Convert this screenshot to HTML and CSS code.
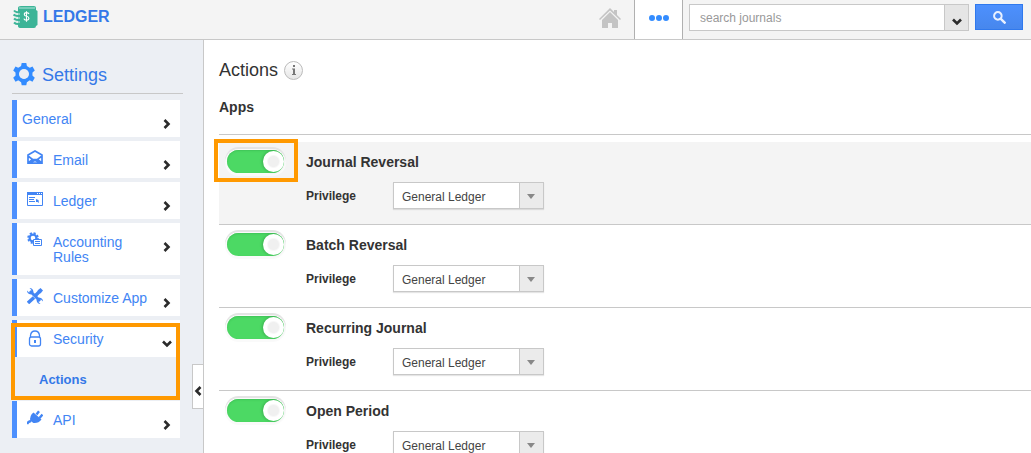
FILE: index.html
```html
<!DOCTYPE html>
<html lang="en">

<head>
    <meta charset="UTF-8">
    <meta name="viewport" content="width=device-width, initial-scale=1.0">
    <title>Ledger Settings</title>
    <link rel="stylesheet" href="styles.css">
</head>

<body>

    <!-- Shared icons -->
    <svg class="sprite" aria-hidden="true">
        <symbol id="chevron" viewBox="0 0 8 10">
            <path d="M1.5 1l4 4-4 4" fill="none" stroke="#2b2b2b" stroke-width="2.6" />
        </symbol>
    </svg>

    <!-- Top bar -->
    <header class="topbar">
        <a href="#" class="brand">
            <svg width="26" height="24" viewBox="0 0 26 24" aria-hidden="true">
                <path d="M5 3Q5 1 8 1h13q2 0 2 2v2l1.500 1v14L23 21q0 2-2 2H8q-3 0-3-2z" fill="#3cb497" />
                <path d="M6 3h16" stroke="#8ad6c4" stroke-width="1.500" />
                <path d="M1 5.500q2 2.500 6 1.500M.5 9.500q2.500 2 6.500 1.500M1 13.500q2 2 6 1.500M1 17.500q2 2 6 1.500" fill="none" stroke="#3cb497" stroke-width="2" />
                <path d="M2 8q2.500 1.500 5 1M2 12q2.500 1.500 5 1M2 16q2.500 1.500 5 1" fill="none" stroke="#d5efe8" />
                <path d="M16 9q-.5-1.400-2.500-1.400-2.200 0-2.200 1.800 0 1.400 2.300 1.900t2.300 2q0 1.900-2.400 1.900-2.300 0-2.600-1.600M13.500 6.200v10.600" fill="none" stroke="#fff" stroke-width="1.100" />
            </svg>
            LEDGER
        </a>
        <nav class="tabs">
            <a href="#" class="tab" aria-label="Home">
                <svg width="22" height="21" viewBox="0 0 22 21" aria-hidden="true">
                    <path d="M0 11L11 0l4 4V2h3v5l4 4-1 1L11 2.500 1 12z" fill="#c4c4c4" />
                    <path d="M3 12l8-8 8 8v8h-6v-5H9v5H3z" fill="#c4c4c4" />
                </svg>
            </a>
            <a href="#" class="tab active" aria-label="More">
                <svg width="20" height="6" viewBox="0 0 20 6" aria-hidden="true">
                    <path d="M3 0a3 3 0 100 6 3 3 0 000-6M10 0a3 3 0 100 6 3 3 0 000-6M17 0a3 3 0 100 6 3 3 0 000-6" fill="#338cff" />
                </svg>
            </a>
        </nav>
        <form class="search">
            <input type="text" class="search-input" placeholder="search journals" aria-label="Search journals">
            <button type="button" class="search-options" aria-label="Search options">
                <svg class="down" width="8" height="10"><use href="#chevron" /></svg>
            </button>
            <button type="button" class="search-btn" aria-label="Search">
                <svg width="13" height="13" viewBox="0 0 12 12" aria-hidden="true">
                    <circle cx="4.500" cy="4.500" r="3.500" fill="none" stroke="#e9f1ff" stroke-width="1.800" />
                    <path d="M7 7l4.500 4.500" stroke="#e9f1ff" stroke-width="2.200" />
                </svg>
            </button>
        </form>
    </header>

    <div class="layout">

        <!-- Sidebar -->
        <aside class="sidebar">
            <h2 class="sidebar-title">
                <svg width="24" height="24" viewBox="-1 0 26 26" aria-hidden="true">
                    <circle cx="12" cy="12" r="7" fill="none" stroke="#338cff" stroke-width="4.500" />
                    <path d="M9.500 0h5l1 5h-7zM9.500 24h5l1-5h-7zM.3 8l2.500-4.300L7.500 6 4 11.500zM23.700 8l-2.500-4.300L16.500 6l3.500 5.500zM.3 16l2.500 4.300L7.500 18 4 12.500zM23.700 16l-2.500 4.300-4.700-2.300 3.500-5.500z" fill="#338cff" />
                    <circle cx="12" cy="12" r="5.400" fill="#eceff4" />
                </svg>
                Settings
            </h2>
            <ul class="menu">
                <li>
                    <a href="#" class="menu-item">
                        <span class="menu-text">General</span>
                        <svg class="arrow" width="8" height="10"><use href="#chevron" /></svg>
                    </a>
                </li>
                <li>
                    <a href="#" class="menu-item">
                        <svg class="menu-icon" width="16" height="16" viewBox="0 0 16 16" aria-hidden="true">
                            <path d="M1 5l7-4 7 4v8.200H1zM1 6l4.500 3.500h5L15 6M1 13l4.500-3.500M15 13l-4.500-3.500M3 12.500l5-2 5 2" fill="none" stroke="#4285f4" stroke-width="1.700" />
                        </svg>
                        <span class="menu-text">Email</span>
                        <svg class="arrow" width="8" height="10"><use href="#chevron" /></svg>
                    </a>
                </li>
                <li>
                    <a href="#" class="menu-item">
                        <svg class="menu-icon" width="16" height="16" viewBox="0 0 16 16" aria-hidden="true">
                            <path d="M.5 1.500h15v13H.5z" fill="none" stroke="#4285f4" />
                            <path d="M0 1h16v3H0z" fill="#4285f4" />
                            <path d="M10 2.500h1M12 2.500h1M14 2.500h1" stroke="#fff" />
                            <path d="M2 6.500h6M2 8.500h5M2 10.500h6" stroke="#4285f4" />
                            <path d="M9 8l2.500 1L12 12l-1.500-1L9 11z" fill="#4285f4" />
                        </svg>
                        <span class="menu-text">Ledger</span>
                        <svg class="arrow" width="8" height="10"><use href="#chevron" /></svg>
                    </a>
                </li>
                <li>
                    <a href="#" class="menu-item">
                        <svg class="menu-icon" width="16" height="16" viewBox="0 0 16 16" aria-hidden="true">
                            <circle cx="6" cy="6" r="3.400" fill="none" stroke="#4285f4" stroke-width="2.200" />
                            <circle cx="6" cy="6" r="5" fill="none" stroke="#4285f4" stroke-width="1.600" stroke-dasharray="2.200 1.720" />
                            <path d="M6.500 7.500h8v6h-8z" fill="#fff" stroke="#4285f4" />
                            <path d="M8 9.500h5M8 11.500h5" stroke="#4285f4" />
                        </svg>
                        <span class="menu-text">Accounting Rules</span>
                        <svg class="arrow" width="8" height="10"><use href="#chevron" /></svg>
                    </a>
                </li>
                <li>
                    <a href="#" class="menu-item">
                        <svg class="menu-icon" width="16" height="16" viewBox="0 0 16 16" aria-hidden="true">
                            <path d="M3 3l10 10" stroke="#4285f4" stroke-width="3" />
                            <path d="M0 2.500L2 4.500 4 4 4.500 2 2.500 0Q6 0 6.500 4L4 6.500Q0 6 0 2.500zM16 13.500l-2-2-2 .5-.5 2 2 2Q10 16 9.500 12L12 9.500q4 .5 4 4z" fill="#4285f4" />
                            <path d="M1 15L7 9.500M8.500 7.500L13 3" stroke="#4285f4" stroke-width="3.400" />
                            <path d="M10.500 2.500L13.500 0 16 2.500l-2.500 3z" fill="#4285f4" />
                        </svg>
                        <span class="menu-text">Customize App</span>
                        <svg class="arrow" width="8" height="10"><use href="#chevron" /></svg>
                    </a>
                </li>
                <li class="highlight highlight-menu">
                    <a href="#" class="menu-item">
                        <svg class="menu-icon" width="16" height="18" viewBox="0 0 16 18" aria-hidden="true">
                            <path d="M3.500 8V6.500Q4 2 8 2t4.500 4.500V8" fill="none" stroke="#4285f4" stroke-width="1.300" />
                            <rect x="2.500" y="8" width="11" height="9" rx="2" fill="none" stroke="#4285f4" stroke-width="1.300" />
                            <path d="M8 11v3" stroke="#4285f4" stroke-width="2" />
                        </svg>
                        <span class="menu-text">Security</span>
                        <svg class="arrow down" width="8" height="10"><use href="#chevron" /></svg>
                    </a>
                    <a href="#" class="submenu-item">Actions</a>
                </li>
                <li>
                    <a href="#" class="menu-item">
                        <svg class="menu-icon" width="16" height="16" viewBox="0 0 16 16" aria-hidden="true">
                            <path d="M0 14Q1 11.500 4 11M9.500 4.500L12 1.200M12.500 8L15.500 4.500" fill="none" stroke="#4285f4" stroke-width="2.400" />
                            <path d="M6.500 2.500l8 7q-3 4-8 3.500L3.500 11q-1.500-5 3-8.500z" fill="#4285f4" />
                        </svg>
                        <span class="menu-text">API</span>
                        <svg class="arrow" width="8" height="10"><use href="#chevron" /></svg>
                    </a>
                </li>
            </ul>
            <button type="button" class="collapse-btn" aria-label="Collapse sidebar">
                <svg class="back" width="8" height="10"><use href="#chevron" /></svg>
            </button>
        </aside>

        <!-- Content -->
        <main class="content">
            <h1 class="page-title">
                Actions
                <button type="button" class="info-btn" aria-label="Information">
                    <svg width="4" height="10" viewBox="0 0 4 10" aria-hidden="true">
                        <path d="M1 0h2v2H1zM0 3.500h3V9h1v1H0V9h1V4.500H0z" fill="#777" />
                    </svg>
                </button>
            </h1>
            <h2 class="section-title">Apps</h2>

            <div class="action-list">
                <section class="action-row selected">
                    <span class="switch highlight highlight-switch">
                        <input type="checkbox" id="journal" class="toggle" checked>
                    </span>
                    <div class="action-body">
                        <label for="journal" class="action-name">Journal Reversal</label>
                        <div class="field">
                            <label for="journal-privilege">Privilege</label>
                            <span class="select-box">
                                <select id="journal-privilege"><option>General Ledger</option></select>
                            </span>
                        </div>
                    </div>
                </section>
                <section class="action-row">
                    <span class="switch">
                        <input type="checkbox" id="batch" class="toggle" checked>
                    </span>
                    <div class="action-body">
                        <label for="batch" class="action-name">Batch Reversal</label>
                        <div class="field">
                            <label for="batch-privilege">Privilege</label>
                            <span class="select-box">
                                <select id="batch-privilege"><option>General Ledger</option></select>
                            </span>
                        </div>
                    </div>
                </section>
                <section class="action-row">
                    <span class="switch">
                        <input type="checkbox" id="recurring" class="toggle" checked>
                    </span>
                    <div class="action-body">
                        <label for="recurring" class="action-name">Recurring Journal</label>
                        <div class="field">
                            <label for="recurring-privilege">Privilege</label>
                            <span class="select-box">
                                <select id="recurring-privilege"><option>General Ledger</option></select>
                            </span>
                        </div>
                    </div>
                </section>
                <section class="action-row">
                    <span class="switch">
                        <input type="checkbox" id="period" class="toggle" checked>
                    </span>
                    <div class="action-body">
                        <label for="period" class="action-name">Open Period</label>
                        <div class="field">
                            <label for="period-privilege">Privilege</label>
                            <span class="select-box">
                                <select id="period-privilege"><option>General Ledger</option></select>
                            </span>
                        </div>
                    </div>
                </section>
            </div>
        </main>
    </div>

</body>

</html>
```
FILE: styles.css
```css
/* General Styling */
* {
    box-sizing: border-box;
}

body {
    font-family: "Liberation Sans", Arial, sans-serif;
    font-size: 14px;
    line-height: 16px;
    color: #333;
    background-color: #fff;
    margin: 0;
    height: 100vh;
    display: flex;
    flex-direction: column;
}

a {
    text-decoration: none;
}

button,
input,
select {
    font-family: inherit;
    margin: 0;
    padding: 0;
}

button {
    cursor: pointer;
}

svg {
    display: block;
    flex: none;
}

.sprite {
    position: absolute;
    width: 0;
    height: 0;
}

.down {
    transform: rotate(90deg);
}

.back {
    transform: rotate(180deg);
}

/* Top Bar */
.topbar {
    display: flex;
    flex: none;
    height: 40px;
    padding-right: 8px;
    background-color: #f4f4f4;
    border-bottom: 1px solid #c8c8c8;
}

.brand {
    display: flex;
    align-items: center;
    gap: 4px;
    padding: 0 0 5px 13px;
    color: #3478e8;
    font-size: 16px;
    font-weight: bold;
    line-height: 18px;
}

.tabs {
    display: flex;
    margin-left: auto;
}

.tab {
    display: flex;
    align-items: center;
    justify-content: center;
    width: 49px;
    padding-bottom: 2px;
}

.tab.active {
    padding-bottom: 3px;
    background-color: #fff;
    border: solid #b0b0b0;
    border-width: 0 1px;
}

.search {
    display: flex;
    align-items: flex-start;
    padding: 4px 0 0 6px;
}

.search-input {
    width: 256px;
    height: 27px;
    padding: 0 10px;
    border: 1px solid #c8c8c8;
    border-radius: 0;
    font-size: 12px;
}

.search-input::placeholder {
    color: #999;
}

.search-options {
    display: flex;
    align-items: center;
    justify-content: center;
    width: 24px;
    height: 27px;
    padding-top: 8px;
    background-color: #e5e5e5;
    border: 1px solid #c8c8c8;
    border-left: 0;
}

.search-btn {
    display: flex;
    align-items: center;
    justify-content: center;
    width: 48px;
    height: 26px;
    margin-left: 6px;
    background: linear-gradient(#4d90fe, #4787ed);
    border: 1px solid #3079ed;
}

/* Layout */
.layout {
    display: flex;
    flex: 1;
    min-height: 0;
}

/* Sidebar */
.sidebar {
    position: relative;
    flex: none;
    width: 204px;
    padding: 20px 20px 0 12px;
    background-color: #eceff4;
    border-right: 1px solid #c8c8c8;
}

.sidebar-title {
    display: flex;
    align-items: center;
    gap: 6px;
    height: 34px;
    margin: 0 0 6px;
    padding-bottom: 4px;
    border-bottom: 1px solid #c8c8c8;
    color: #3478e8;
    font-size: 18px;
    font-weight: normal;
}

.menu {
    list-style-type: none;
    margin: 0;
    padding: 0 3px 0 0;
}

.menu-item {
    display: flex;
    margin-bottom: 4px;
    padding: 12px 9px 7px 5px;
    background-color: #fff;
    border-left: 5px solid #4d90fe;
    color: #4285f4;
    line-height: 15px;
}

.menu-icon {
    margin: -3px 10px 0 5px;
}

.menu-text {
    flex: 1;
    padding-bottom: 3px;
}

.arrow {
    margin: 7px 0 0 2px;
}

.submenu-item {
    display: block;
    height: 40px;
    padding: 11px 27px;
    color: #3478e8;
    font-size: 13px;
    font-weight: bold;
}

.collapse-btn {
    position: absolute;
    top: 324px;
    right: 0;
    display: flex;
    align-items: center;
    justify-content: center;
    width: 11px;
    height: 45px;
    padding-top: 9px;
    background-color: #fff;
    border: 1px solid #c8c8c8;
    border-right: 0;
}

/* Highlight frames */
.highlight {
    position: relative;
}

.highlight::after {
    content: "";
    position: absolute;
    border: 4px solid #ff9900;
    pointer-events: none;
}

.highlight-menu::after {
    inset: 3px 0 1px -1px;
}

.highlight-switch::after {
    inset: -11px -14px -9px -13px;
}

/* Content */
.content {
    flex: 1;
    min-width: 0;
    padding: 20px 0 0 15px;
    overflow-y: auto;
    scrollbar-width: none;
}

.page-title {
    display: flex;
    align-items: center;
    gap: 6px;
    height: 20px;
    margin: 0;
    font-size: 18px;
    font-weight: normal;
}

.info-btn {
    display: flex;
    align-items: center;
    justify-content: center;
    width: 19px;
    height: 19px;
    background: linear-gradient(#fff, #e6e6e6);
    border: 1px solid #bbb;
    border-radius: 50%;
}

.section-title {
    margin: 19px 0;
    font-size: 14px;
}

.action-list {
    padding-top: 7px;
    border-top: 1px solid #c8c8c8;
}

.action-row {
    display: flex;
    height: 83px;
    padding: 8px;
    border-bottom: 1px solid #c8c8c8;
}

.action-row.selected {
    background-color: #f4f4f4;
}

.switch {
    align-self: flex-start;
    width: 57px;
    margin-right: 22px;
}

/* Toggle Switch */
.toggle {
    appearance: none;
    display: flex;
    align-items: center;
    justify-content: flex-end;
    width: 57px;
    height: 23px;
    background-color: #4cd964;
    border-radius: 12px;
    box-shadow: inset 0 1px 2px #3fc457, 0 1px 0 2px #fafafa, 0 -1px 0 2px #e4e4e4;
    cursor: pointer;
}

.toggle::before {
    content: "";
    width: 21px;
    height: 21px;
    background: radial-gradient(circle, #f0f0f0 5px, #fff 7px);
    border-radius: 50%;
    box-shadow: -1px 0 3px rgba(0, 0, 0, 0.2);
}

.toggle:not(:checked) {
    justify-content: flex-start;
    background-color: #ddd;
}

.action-name {
    display: block;
    margin: 4px 0 12px;
    font-weight: bold;
}

.field {
    display: flex;
    align-items: center;
    font-size: 12px;
    font-weight: bold;
}

.field label {
    width: 87px;
}

/* Select */
.select-box {
    position: relative;
    width: 151px;
}

.select-box select {
    appearance: none;
    display: block;
    width: 100%;
    height: 27px;
    padding: 2px 30px 0 8px;
    background: linear-gradient(#c8c8c8, #c8c8c8) right 23px top / 1px 100% no-repeat, linear-gradient(#ebebeb, #ebebeb) right / 23px 100% no-repeat, #fff;
    border: 1px solid #c8c8c8;
    border-radius: 0;
    box-shadow: 0 1px 1px rgba(0, 0, 0, 0.1);
    color: #444;
    font-size: 12px;
}

.select-box::after {
    content: "";
    position: absolute;
    top: 12px;
    right: 9px;
    border: 4px solid transparent;
    border-top: 5px solid #888;
    border-bottom: 0;
    pointer-events: none;
}
```
